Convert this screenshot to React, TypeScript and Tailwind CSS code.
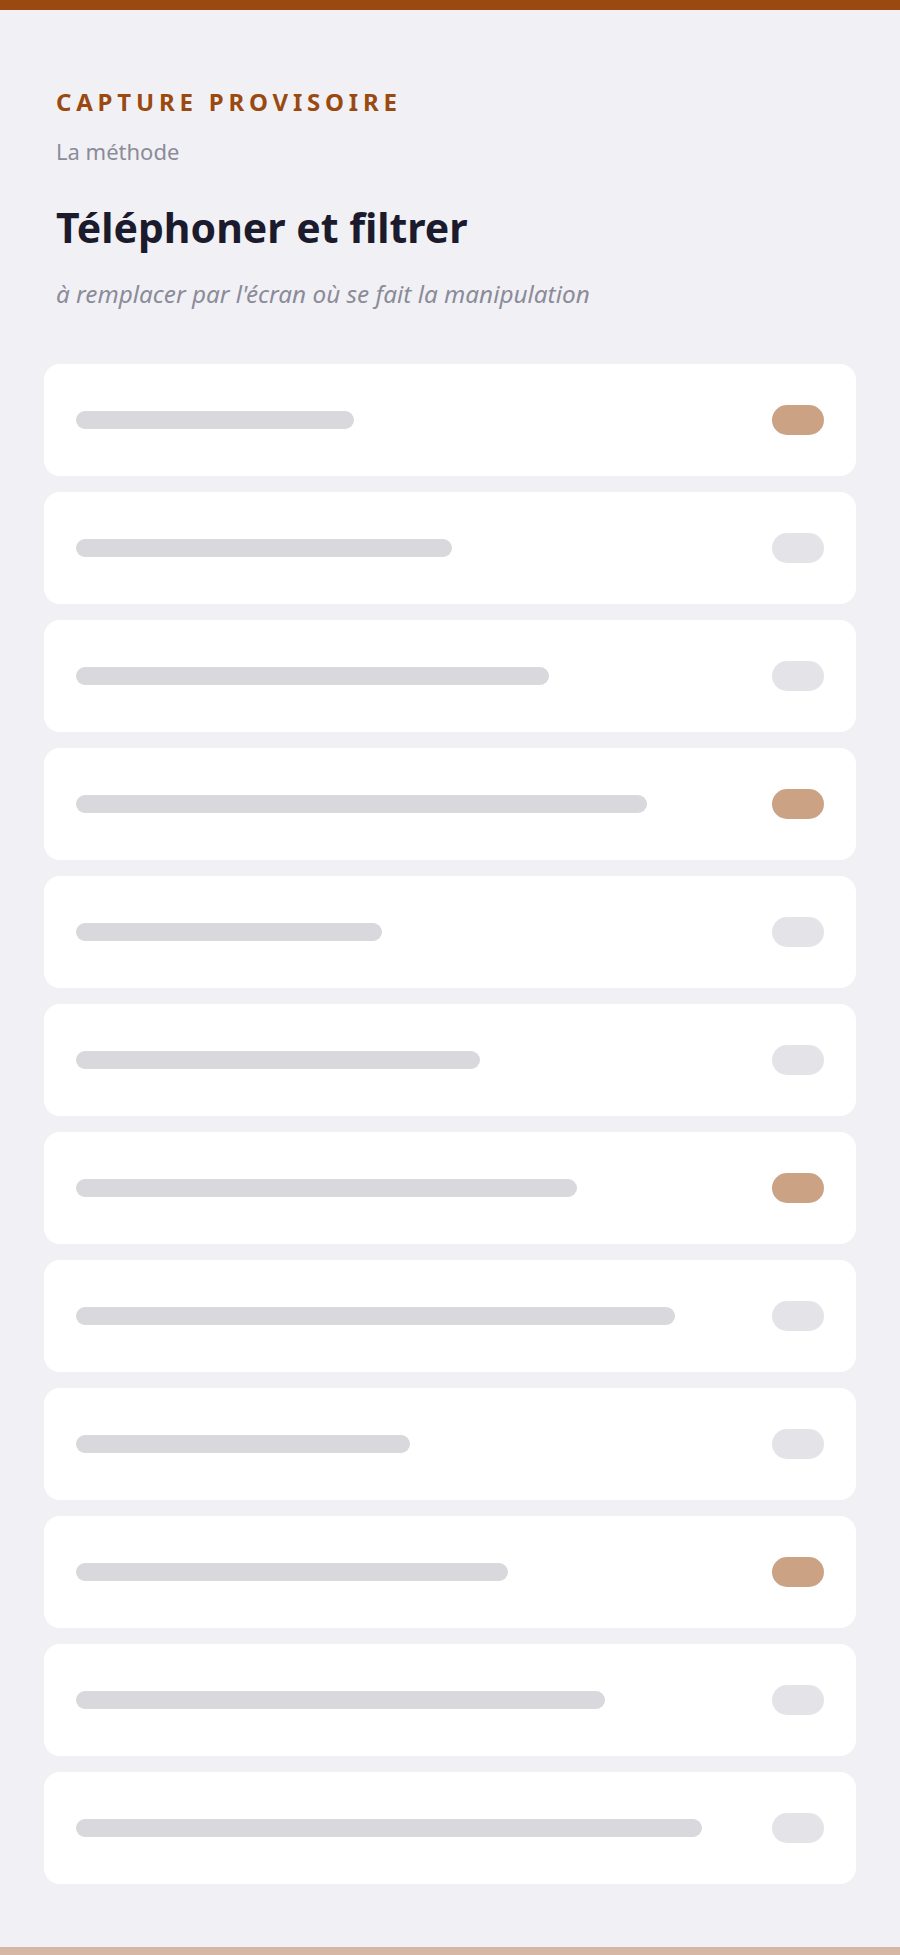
import React from "react";

const rows = [
  { w: 40, on: true },
  { w: 54, on: false },
  { w: 68, on: false },
  { w: 82, on: true },
  { w: 44, on: false },
  { w: 58, on: false },
  { w: 72, on: true },
  { w: 86, on: false },
  { w: 48, on: false },
  { w: 62, on: true },
  { w: 76, on: false },
  { w: 90, on: false },
];

const Row: React.FC<{ w: number; on: boolean }> = ({ w, on }) => (
  <div className="flex h-[112px] items-center rounded-[16px] bg-white px-[32px]">
    <div className="flex-1">
      <div className="h-[18px] rounded-full bg-[#d8d8dd]" style={{ width: `${w}%` }} />
    </div>
    <div
      className={`h-[30px] w-[52px] rounded-full ${on ? "bg-[#cca285]" : "bg-[#e3e3e8]"}`}
    />
  </div>
);

export default function App() {
  return (
    <div className="flex min-h-[1955px] flex-col bg-[#f1f1f5] font-['Noto_Sans',sans-serif]">
      <div className="h-[10px] bg-[#9a4a10]" />
      <div className="flex-1 px-[44px]">
        <div className="px-[12px] pt-[80px]">
          <div className="text-[24px] font-bold uppercase leading-none tracking-[0.2em] text-[#9a4a10]">
            Capture provisoire
          </div>
          <div className="mt-[26px] text-[22px] leading-none text-[#8b8b99]">La méthode</div>
          <h1 className="mt-[45px] text-[41px] font-bold leading-none text-[#1b1b2d]">
            Téléphoner et filtrer
          </h1>
          <p className="mt-[34px] text-[24.3px] italic leading-none text-[#8b8b99]">
            à remplacer par l'écran où se fait la manipulation
          </p>
        </div>
        <div className="mt-[58px] flex flex-col gap-[16px]">
          {rows.map((r, i) => (
            <Row key={i} w={r.w} on={r.on} />
          ))}
        </div>
      </div>
      <div className="h-[8px] bg-[#d6b6a5]" />
    </div>
  );
}
